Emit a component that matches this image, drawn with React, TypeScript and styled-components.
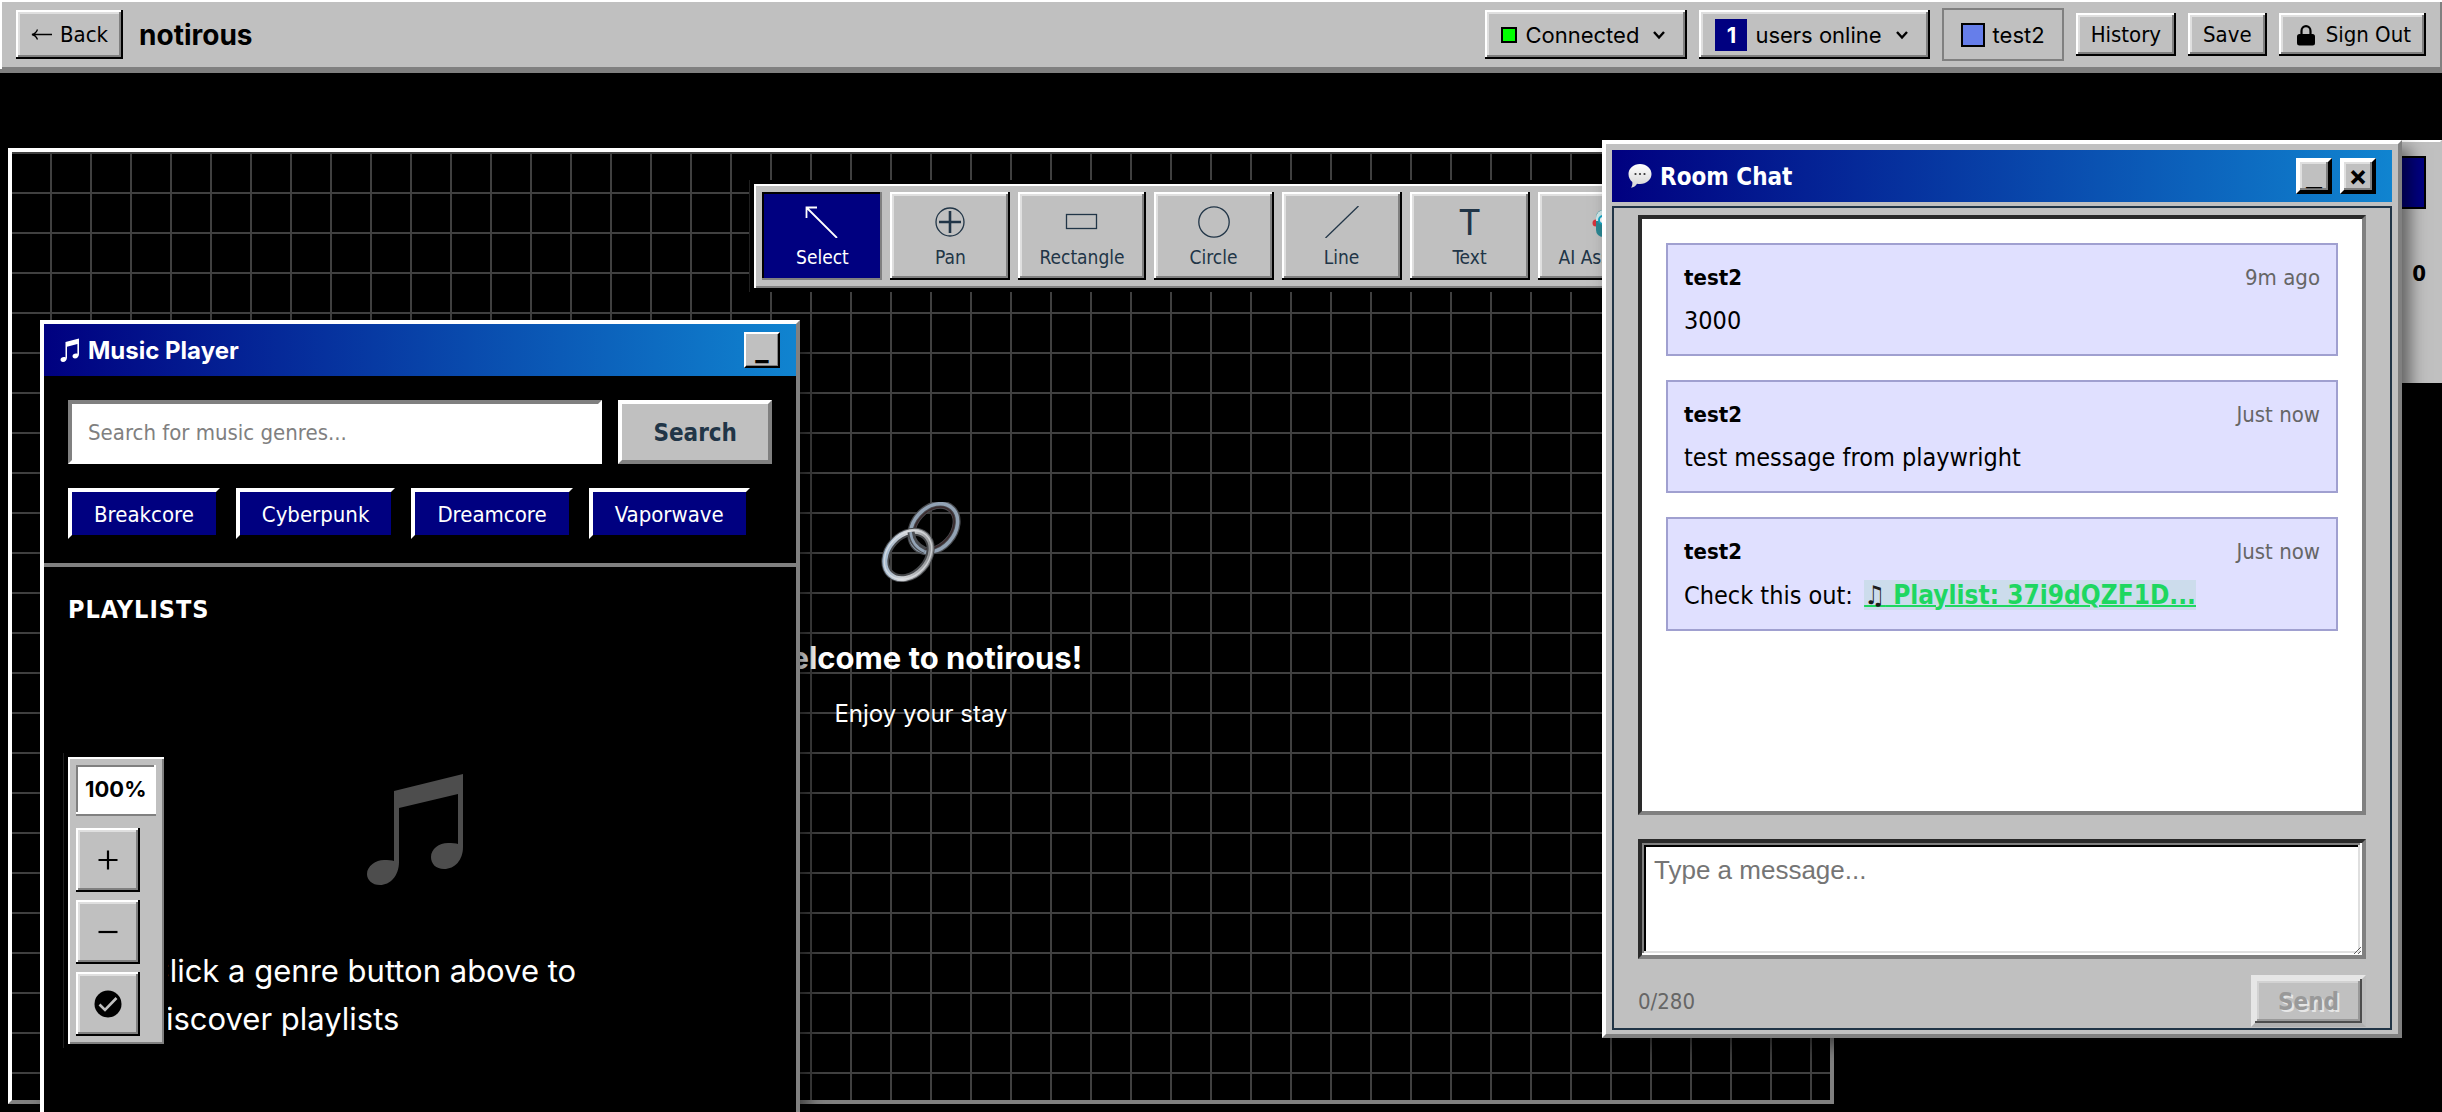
import React, { useState } from 'react';
import styled, { createGlobalStyle, css } from 'styled-components';

const tahoma = '"DejaVu Sans Condensed", "DejaVu Sans", sans-serif';
const inter = 'Inter, "Liberation Sans", sans-serif';
const arial = '"Liberation Sans", Arial, sans-serif';

const GlobalStyle = createGlobalStyle`
  *, *::before, *::after { box-sizing: border-box; }
  body {
    margin: 0;
    background: #000;
    color: #000;
    font-family: ${tahoma};
    font-size: 22px;
    overflow: hidden;
  }
  h1, h2, h3, p { margin: 0; }
  button, input, textarea { margin: 0; border-radius: 0; }
  button { cursor: pointer; }
  svg { display: block; flex: none; }
`;

const raised = css`
  box-shadow: inset -2px -2px #000, inset 2px 2px #fff, inset -4px -4px #808080, inset 4px 4px #dfdfdf;
`;

const sunken = css`
  box-shadow: inset -2px -2px #808080, inset 2px 2px #000;
`;

const floatingPanel = css`
  background: #c0c0c0;
  box-shadow: inset 2px 2px #fff, inset -2px -2px #808080, 0 0 0 4px #000, -1px 0 0 4px #202020;
`;

const Page = styled.div`
  position: relative;
  display: flex;
  flex-direction: column;
  height: 100vh;
  overflow: hidden;
`;

/* Header */

const HeaderBar = styled.header`
  display: flex;
  align-items: center;
  justify-content: space-between;
  padding: 8px 16px;
  background: #c0c0c0;
  border-bottom: 4px solid #808080;
  box-shadow: inset 2px 2px #fff, inset -2px -2px #808080;
`;

const HeaderGroup = styled.div<{ $gap: number }>`
  display: flex;
  align-items: center;
  gap: ${(p) => p.$gap}px;
`;

const HeaderButton = styled.button<{ $tall?: boolean; $font?: string }>`
  display: flex;
  align-items: center;
  gap: 8px;
  min-height: ${(p) => (p.$tall ? 49 : 43)}px;
  padding: 0 ${(p) => (p.$font ? 16 : 15)}px;
  border: 0;
  background: #c0c0c0;
  color: #000;
  font: 22px ${(p) => p.$font ?? tahoma};
  ${raised}
`;

const RoomName = styled.h1`
  font: 700 28px/36px ${inter};
`;

const StatusLight = styled.span`
  width: 16px;
  height: 16px;
  border: 2px solid #000;
  background: #00ff00;
`;

const CountBadge = styled.span`
  display: grid;
  place-items: center;
  width: 32px;
  height: 32px;
  background: #000080;
  color: #fff;
  font-weight: 700;
`;

const UserTag = styled.div`
  display: flex;
  align-items: center;
  gap: 8px;
  min-height: 53px;
  padding: 0 17px;
  border: 2px solid #808080;
  font-family: ${inter};
`;

const UserColor = styled.span`
  width: 24px;
  height: 24px;
  border: 2px solid #000;
  background: #667eea;
`;

/* Workspace */

const Workspace = styled.main`
  flex: 1;
  display: grid;
  grid-template-columns: minmax(0, 1fr) 600px;
  padding-top: 67px;
`;

const Canvas = styled.section`
  display: flex;
  flex-direction: column;
  align-items: center;
  justify-content: center;
  margin: 8px;
  padding-bottom: 50px;
  border: 4px solid;
  border-color: #fff #808080 #808080 #fff;
  background-color: #000;
  background-image: linear-gradient(#404040 2px, transparent 2px),
    linear-gradient(90deg, #404040 2px, transparent 2px);
  background-size: 40px 40px;
  background-position: 0 0, -2px 0;
  color: #fff;
  font-family: ${inter};
`;

const WelcomeIcon = styled.div`
  display: grid;
  place-items: center;
  height: 144px;
  margin-bottom: 20px;
`;

const WelcomeTitle = styled.h2`
  margin-bottom: 14px;
  font-size: 31px;
  line-height: 48px;
`;

const WelcomeText = styled.p`
  font-size: 24px;
  line-height: 36px;
`;

const SidePanel = styled.aside`
  align-self: start;
  padding: 14px 14px 90px;
  border: 2px solid;
  border-color: #fff #c0c0c0 #c0c0c0 #fff;
  background: #c0c0c0;
`;

const SidePanelHeader = styled.div`
  height: 53px;
  margin-bottom: 48px;
  border: 2px solid #000;
  background: #000080;
`;

const SidePanelCount = styled.p`
  text-align: right;
  font-weight: 700;
  line-height: 34px;
`;

/* Tool bar */

const ToolBarLayer = styled.div`
  position: absolute;
  top: 184px;
  left: 0;
  right: 0;
  display: flex;
  justify-content: center;
  pointer-events: none;
`;

const ToolBar = styled.div`
  display: flex;
  gap: 8px;
  padding: 8px;
  pointer-events: auto;
  ${floatingPanel}
`;

const ToolButton = styled.button<{ $active: boolean }>`
  display: flex;
  flex-direction: column;
  align-items: center;
  gap: 7px;
  min-width: 120px;
  padding: 14px 21px 11px;
  border: 0;
  background: ${(p) => (p.$active ? '#000080' : '#c0c0c0')};
  color: ${(p) => (p.$active ? '#fff' : '#213547')};
  font: 19px/24px ${tahoma};
  ${(p) => (p.$active ? sunken : raised)}
`;

const ToolLetter = styled.span`
  font: 36px/32px ${inter};
`;

/* Windows */

const windowFrame = css`
  position: absolute;
  display: flex;
  flex-direction: column;
  border: 4px solid;
  border-color: #fff #808080 #808080 #fff;
  box-shadow: 8px 8px 16px rgba(0, 0, 0, 0.5);
`;

const MusicWindow = styled.section`
  ${windowFrame}
  left: 40px;
  top: 320px;
  width: 760px;
  height: 840px;
  background: #000;
  color: #fff;
`;

const ChatWindow = styled.section`
  ${windowFrame}
  right: 40px;
  top: 140px;
  width: 800px;
  height: 898px;
  padding: 6px 6px 4px;
  gap: 4px;
  background: #c0c0c0;
`;

const TitleBar = styled.header`
  display: flex;
  flex: none;
  align-items: center;
  gap: 8px;
  height: 52px;
  padding: 0 16px;
  background: linear-gradient(90deg, #000080, #1084d0);
  color: #fff;
`;

const WindowTitle = styled.h2<{ $font: string }>`
  flex: 1;
  padding-top: 1px;
  font: 700 24px/36px ${(p) => p.$font};
`;

const WindowButton = styled.button<{ $thick?: boolean; $font?: string }>`
  width: 36px;
  height: 36px;
  padding: 0;
  background: #c0c0c0;
  color: #000;
  font: 700 28px/28px ${(p) => p.$font ?? inter};
  border: ${(p) => (p.$thick ? 4 : 2)}px solid;
  border-color: #fff #000 #000 #fff;
  box-shadow: ${(p) =>
    p.$thick ? 'inset -2px -2px #808080, inset 2px 2px #dfdfdf' : 'inset -1px -1px #808080'};
`;

const MusicControls = styled.div`
  display: flex;
  flex-direction: column;
  gap: 24px;
  padding: 24px;
  border-bottom: 4px solid #808080;
`;

const SearchForm = styled.form`
  display: flex;
  gap: 16px;
`;

const SearchInput = styled.input`
  flex: 1;
  min-width: 0;
  height: 64px;
  padding: 0 16px;
  border: 4px solid;
  border-color: #808080 #fff #fff #808080;
  background: #fff;
  color: #000;
  font: 22px ${tahoma};
  &::placeholder { color: #808080; opacity: 1; }
`;

const SearchButton = styled.button`
  padding: 2px 31px 0;
  border: 4px solid;
  border-color: #fff #808080 #808080 #fff;
  background: #c0c0c0;
  color: #213547;
  font: 700 24px ${tahoma};
`;

const GenreList = styled.div`
  display: flex;
  flex-wrap: wrap;
  gap: 16px;
`;

const GenreButton = styled.button`
  padding: 9px 22px 7px;
  border: 4px solid;
  border-color: #fff #000 #000 #fff;
  background: #000080;
  color: #fff;
  font: 22px/27px ${tahoma};
`;

const Playlists = styled.div`
  padding: 24px;
`;

const PlaylistsHeading = styled.h3`
  padding-top: 1px;
  font-size: 25px;
  line-height: 36px;
  letter-spacing: 1px;
  text-transform: uppercase;
`;

const EmptyState = styled.div`
  display: flex;
  flex-direction: column;
  align-items: center;
  gap: 62px;
  padding-top: 146px;
`;

const EmptyText = styled.p`
  width: 546px;
  font: 31px/48px ${inter};
`;

/* Zoom controls */

const ZoomPanel = styled.div`
  position: absolute;
  left: 68px;
  bottom: 68px;
  display: flex;
  flex-direction: column;
  gap: 8px;
  padding: 8px;
  ${floatingPanel}
`;

const ZoomLevel = styled.output`
  display: block;
  margin-bottom: 4px;
  padding: 8px 9px;
  border-bottom: 2px solid #808080;
  background: #fff;
  box-shadow: inset -2px -2px #fff, inset 2px 2px #808080;
  font: 700 22px/33px ${inter};
`;

const ZoomButton = styled.button`
  display: grid;
  place-items: center;
  width: 64px;
  height: 64px;
  padding: 0;
  border: 0;
  background: #c0c0c0;
  color: #000;
  ${raised}
`;

/* Chat */

const ChatBody = styled.div`
  flex: 1;
  display: flex;
  flex-direction: column;
  min-height: 0;
  padding: 7px 24px 1px;
  border: 2px solid #213547;
`;

const MessageList = styled.div`
  flex: 1;
  display: flex;
  flex-direction: column;
  gap: 24px;
  min-height: 0;
  margin-bottom: 24px;
  padding: 24px;
  border: 4px solid;
  border-color: #2a2a2a #808080 #808080 #2a2a2a;
  background: #fff;
`;

const MessageCard = styled.article`
  display: flex;
  flex-direction: column;
  gap: 8px;
  padding: 16px 16px 15px;
  border: 2px solid #a0a0d0;
  background: #e0e0ff;
`;

const MessageMeta = styled.div`
  display: flex;
  justify-content: space-between;
  line-height: 34px;
`;

const MessageTime = styled.time`
  color: #666;
`;

const MessageText = styled.p`
  font-size: 25px;
  line-height: 36px;
`;

const PlaylistLink = styled.a`
  margin-left: 4px;
  background: #ccdcec;
  color: #1ed760;
  font-size: 26px;
  font-weight: 700;
  text-decoration: underline 2px;
`;

const LinkNote = styled.span`
  color: #1c1c1c;
  font-weight: 400;
`;

const MessageInput = styled.textarea`
  display: block;
  flex: none;
  width: 100%;
  height: 120px;
  margin-bottom: 16px;
  padding: 12px;
  border: 4px solid;
  border-color: #2a2a2a #808080 #808080 #2a2a2a;
  background: #fff;
  box-shadow: inset -2px -2px #fff, inset 2px 2px #808080, inset -4px -4px #dfdfdf, inset 4px 4px #000;
  color: #000;
  font: 26px/30px ${arial};
  resize: vertical;
  &::placeholder { color: #757575; opacity: 1; }
`;

const ChatFooter = styled.div`
  display: flex;
  align-items: center;
  justify-content: space-between;
  height: 52px;
  color: #666;
`;

const SendButton = styled.button`
  height: 52px;
  padding: 2px 23px 0;
  border: 4px solid;
  border-color: #e6e6e6 #bcbcbc #b0b0b0 #e6e6e6;
  background: #c0c0c0;
  box-shadow: inset -2px -2px #4d4d4d, inset 2px 2px #e6e6e6, inset -4px -4px #999, inset 4px 4px #d2d2d2;
  color: #999;
  font: 700 24px ${tahoma};
  text-shadow: 2px 2px #e6e6e6;
  cursor: default;
`;

/* Icons */

const BackArrow = () => (
  <svg width="21" height="22" viewBox="0 0 21 22" fill="none" stroke="#000" strokeWidth="1.3" aria-hidden="true">
    <path d="M21 10.5H1.5M6.5 5.5Q5 9.500 1 10.500Q5 11.500 6.500 15.500" />
  </svg>
);

const Chevron = () => (
  <svg width="24" height="24" viewBox="0 0 24 24" fill="none" stroke="#000" strokeWidth="2.4" aria-hidden="true">
    <path d="M7 9l5 5.500L17 9" />
  </svg>
);

const Lock = () => (
  <svg width="24" height="24" viewBox="0 0 24 24" aria-hidden="true">
    <path d="M7.500 12V8a4.500 4.800 0 0 1 9 0v4" fill="none" stroke="#000" strokeWidth="2.200" />
    <rect x="3" y="11" width="18" height="11.500" rx="2.500" fill="#000" />
  </svg>
);

const MusicNote = () => (
  <svg width="106" height="111" viewBox="0 0 106 111" fill="#4d4d4d" aria-hidden="true">
    <path d="M27 17 96 0V73c0 13-8 22-19 22-8 0-13-5-13-12 0-8 8-14 17-14 4 0 8 0 10 1V20L32 34v54c0 14-9 23-19 23-8 0-13-5-13-11 0-8 9-14 17-14 4 0 8 0 10 1z" />
  </svg>
);

const TitleNote = () => (
  <svg width="20" height="24" viewBox="0 0 20 24" fill="#fff" aria-hidden="true">
    <path d="M5.500 4 19 .5V16c0 2.700-1.800 4.500-4 4.500-1.600 0-2.500-1-2.500-2.200 0-1.700 1.600-2.700 3.400-2.700.6 0 1.100.1 1.500.2V6L7 8.700v10.800C7 22.200 5.200 24 3 24 1.400 24 .5 23 .5 21.800c0-1.700 1.600-2.700 3.400-2.700.6 0 1.200.1 1.600.3z" />
  </svg>
);

const SpeechBubble = () => (
  <svg width="24" height="26" viewBox="0 0 24 26" aria-hidden="true">
    <defs>
      <linearGradient id="bubble" x1="0" y1="0" x2="0" y2="1">
        <stop offset="0" stopColor="#fff" />
        <stop offset="1" stopColor="#d4d4d4" />
      </linearGradient>
    </defs>
    <path d="M12 1c6.500 0 11.500 4.500 11.500 10S18.500 21 12 21c-1 0-2-.1-3-.3-1.200 2-3.300 3.700-6 4 1.200-1.500 1.600-3.400 1.300-5.600C2 17.200.5 14.300.5 11 .5 5.500 5.500 1 12 1z" fill="url(#bubble)" />
    <g fill="#333">
      <circle cx="7.500" cy="11" r="1.100" />
      <circle cx="12" cy="11" r="1.100" />
      <circle cx="16.500" cy="11" r="1.100" />
    </g>
  </svg>
);

const ChainLinks = () => (
  <svg width="80" height="80" viewBox="0 0 80 80" fill="none" role="img" aria-label="Chain links">
    <defs>
      <linearGradient id="steel" x1="0" y1="0" x2="1" y2="1">
        <stop offset="0" stopColor="#8aa9c9" />
        <stop offset=".45" stopColor="#d2d4d7" />
        <stop offset="1" stopColor="#77797c" />
      </linearGradient>
    </defs>
    <g transform="rotate(-48 53 26)">
      <ellipse cx="53" cy="26" rx="26" ry="19.500" stroke="#4a4c50" strokeWidth="8" />
      <ellipse cx="53" cy="26" rx="27" ry="20.500" stroke="#93a3b5" strokeWidth="3.500" />
      <ellipse cx="53" cy="26" rx="23.500" ry="17" stroke="#3b2a2d" strokeWidth="1.500" />
    </g>
    <g transform="rotate(-48 27 53)">
      <ellipse cx="27" cy="53" rx="26" ry="19.500" stroke="#46484b" strokeWidth="8" />
      <ellipse cx="27" cy="53" rx="26.500" ry="20" stroke="url(#steel)" strokeWidth="5" />
      <ellipse cx="27" cy="53" rx="27" ry="20.500" stroke="#e4e7ea" strokeWidth="1.500" opacity=".7" />
    </g>
    <path d="M30 30c1 9 6 15 14 18.500" stroke="#4a4c50" strokeWidth="7" />
    <path d="M29.500 30c1 9.500 6 16 14 19.500" stroke="#93a3b5" strokeWidth="2.500" />
  </svg>
);

const ToolIcon = ({ children }: { children: React.ReactNode }) => (
  <svg width="36" height="32" viewBox="0 0 36 32" fill="none" stroke="currentColor" strokeWidth="1.300" aria-hidden="true">
    {children}
  </svg>
);

const Robot = () => (
  <ToolIcon>
    <g stroke="none">
      <circle cx="5" cy="17" r="3.500" fill="#d8323c" />
      <circle cx="31" cy="17" r="3.500" fill="#d8323c" />
      <rect x="5" y="4" width="26" height="27" rx="7" fill="#2b8793" />
      <path d="M5 15V12a8 8 0 0 1 8-8h10a8 8 0 0 1 8 8v3z" fill="#cfe9ea" />
      <circle cx="12" cy="14" r="4" fill="#fff" stroke="#16a9c9" strokeWidth="2" />
      <circle cx="24" cy="14" r="4" fill="#fff" stroke="#16a9c9" strokeWidth="2" />
      <rect x="12" y="23" width="12" height="4" fill="#dff3f4" />
    </g>
  </ToolIcon>
);

const tools: { name: string; icon: React.ReactNode }[] = [
  { name: 'Select', icon: <ToolIcon><path d="M33 32 3 2M2.500 12V1.500H13" strokeWidth="1.800" /></ToolIcon> },
  { name: 'Pan', icon: <ToolIcon><circle cx="18" cy="16" r="14" /><path d="M18 5v22M7 16h22" strokeWidth="2.600" /></ToolIcon> },
  { name: 'Rectangle', icon: <ToolIcon><rect x="2.500" y="8.500" width="30" height="14" /></ToolIcon> },
  { name: 'Circle', icon: <ToolIcon><circle cx="18" cy="16" r="15.200" /></ToolIcon> },
  { name: 'Line', icon: <ToolIcon><path d="M1.500 32 34.500 0" /></ToolIcon> },
  { name: 'Text', icon: <ToolLetter aria-hidden="true">T</ToolLetter> },
  { name: 'AI Assistant', icon: <Robot /> },
];

const genres = ['Breakcore', 'Cyberpunk', 'Dreamcore', 'Vaporwave'];

const messages: { author: string; time: string; body: React.ReactNode }[] = [
  { author: 'test2', time: '9m ago', body: '3000' },
  { author: 'test2', time: 'Just now', body: 'test message from playwright' },
  {
    author: 'test2',
    time: 'Just now',
    body: (
      <>
        Check this out:{' '}
        <PlaylistLink href="#playlist">
          <LinkNote>♫</LinkNote> Playlist: 37i9dQZF1D...
        </PlaylistLink>
      </>
    ),
  },
];

export default function App() {
  const [tool, setTool] = useState('Select');

  return (
    <Page>
      <GlobalStyle />
      <HeaderBar>
        <HeaderGroup $gap={16}>
          <HeaderButton $tall><BackArrow />Back</HeaderButton>
          <RoomName>notirous</RoomName>
        </HeaderGroup>
        <HeaderGroup $gap={12}>
          <HeaderButton $tall $font={inter}><StatusLight />Connected<Chevron /></HeaderButton>
          <HeaderButton $tall $font={inter}><CountBadge>1</CountBadge>users online<Chevron /></HeaderButton>
          <UserTag><UserColor />test2</UserTag>
          <HeaderButton>History</HeaderButton>
          <HeaderButton>Save</HeaderButton>
          <HeaderButton><Lock />Sign Out</HeaderButton>
        </HeaderGroup>
      </HeaderBar>

      <Workspace>
        <Canvas>
          <WelcomeIcon><ChainLinks /></WelcomeIcon>
          <WelcomeTitle>Welcome to notirous!</WelcomeTitle>
          <WelcomeText>Enjoy your stay</WelcomeText>
        </Canvas>
        <SidePanel>
          <SidePanelHeader />
          <SidePanelCount>0</SidePanelCount>
        </SidePanel>
      </Workspace>

      <ToolBarLayer>
        <ToolBar role="toolbar" aria-label="Drawing tools">
          {tools.map(({ name, icon }) => (
            <ToolButton key={name} $active={tool === name} aria-pressed={tool === name} onClick={() => setTool(name)}>
              {icon}
              {name}
            </ToolButton>
          ))}
        </ToolBar>
      </ToolBarLayer>

      <MusicWindow>
        <TitleBar>
          <TitleNote />
          <WindowTitle $font={inter}>Music Player</WindowTitle>
          <WindowButton aria-label="Minimize music player">_</WindowButton>
        </TitleBar>
        <MusicControls>
          <SearchForm onSubmit={(e) => e.preventDefault()}>
            <SearchInput type="text" aria-label="Search for music genres" placeholder="Search for music genres..." />
            <SearchButton type="submit">Search</SearchButton>
          </SearchForm>
          <GenreList>
            {genres.map((genre) => <GenreButton key={genre}>{genre}</GenreButton>)}
          </GenreList>
        </MusicControls>
        <Playlists>
          <PlaylistsHeading>Playlists</PlaylistsHeading>
          <EmptyState>
            <MusicNote />
            <EmptyText>Click a genre button above to discover playlists</EmptyText>
          </EmptyState>
        </Playlists>
      </MusicWindow>

      <ZoomPanel>
        <ZoomLevel>100%</ZoomLevel>
        <ZoomButton aria-label="Zoom in">
          <svg width="20" height="20" viewBox="0 0 20 20" stroke="#000" strokeWidth="2.200" aria-hidden="true">
            <path d="M10 .5v19M.5 10h19" />
          </svg>
        </ZoomButton>
        <ZoomButton aria-label="Zoom out">
          <svg width="20" height="20" viewBox="0 0 20 20" stroke="#000" strokeWidth="2.200" aria-hidden="true">
            <path d="M.5 10h19" />
          </svg>
        </ZoomButton>
        <ZoomButton aria-label="Reset zoom">
          <svg width="28" height="28" viewBox="0 0 28 28" fill="none" aria-hidden="true">
            <circle cx="14" cy="14" r="13.500" fill="#000" />
            <path d="M5.500 14.500 11 20 22.500 8" stroke="#c0c0c0" strokeWidth="2.600" />
          </svg>
        </ZoomButton>
      </ZoomPanel>

      <ChatWindow>
        <TitleBar>
          <SpeechBubble />
          <WindowTitle $font={tahoma}>Room Chat</WindowTitle>
          <WindowButton $thick $font={arial} aria-label="Minimize chat">_</WindowButton>
          <WindowButton $thick aria-label="Close chat">×</WindowButton>
        </TitleBar>
        <ChatBody>
          <MessageList>
            {messages.map((message, index) => (
              <MessageCard key={index}>
                <MessageMeta>
                  <strong>{message.author}</strong>
                  <MessageTime>{message.time}</MessageTime>
                </MessageMeta>
                <MessageText>{message.body}</MessageText>
              </MessageCard>
            ))}
          </MessageList>
          <MessageInput aria-label="Message" placeholder="Type a message..." />
          <ChatFooter>
            <span>0/280</span>
            <SendButton disabled>Send</SendButton>
          </ChatFooter>
        </ChatBody>
      </ChatWindow>
    </Page>
  );
}
